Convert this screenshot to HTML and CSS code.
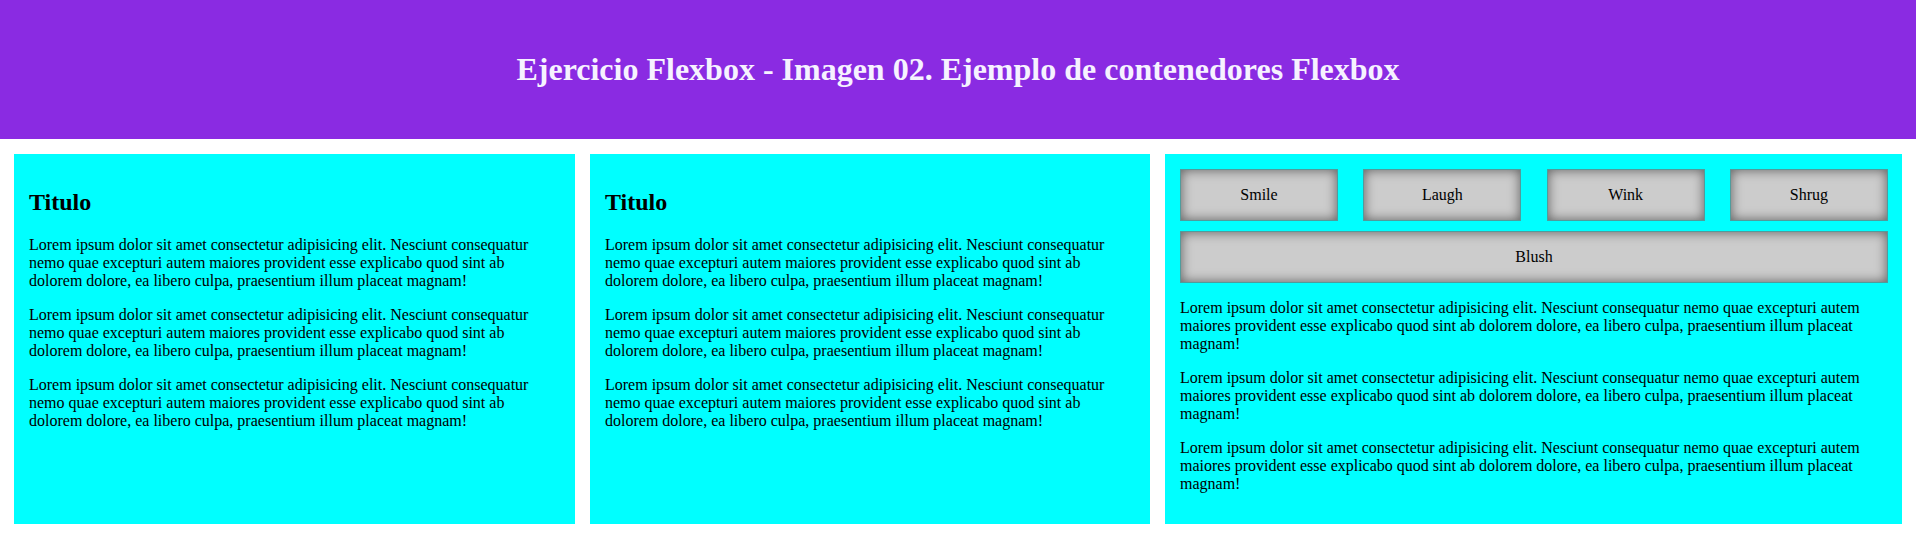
FILE: index.html
```html
<!DOCTYPE html>
<html lang="es">
<head>
<meta charset="utf-8">
<title>Ejercicio Flexbox</title>
<link rel="stylesheet" href="styles.css">
</head>
<body>
<header class="top">
  <h1 class="top-title">Ejercicio Flexbox - Imagen 02. Ejemplo de contenedores Flexbox</h1>
</header>
<main class="main">
  <article class="card card-a">
    <h2 class="card-title">Titulo</h2>
    <p class="text">Lorem ipsum dolor sit amet consectetur adipisicing elit. Nesciunt consequatur nemo quae excepturi autem maiores provident esse explicabo quod sint ab dolorem dolore, ea libero culpa, praesentium illum placeat magnam!</p>
    <p class="text">Lorem ipsum dolor sit amet consectetur adipisicing elit. Nesciunt consequatur nemo quae excepturi autem maiores provident esse explicabo quod sint ab dolorem dolore, ea libero culpa, praesentium illum placeat magnam!</p>
    <p class="text">Lorem ipsum dolor sit amet consectetur adipisicing elit. Nesciunt consequatur nemo quae excepturi autem maiores provident esse explicabo quod sint ab dolorem dolore, ea libero culpa, praesentium illum placeat magnam!</p>
  </article>
  <article class="card card-b">
    <h2 class="card-title">Titulo</h2>
    <p class="text">Lorem ipsum dolor sit amet consectetur adipisicing elit. Nesciunt consequatur nemo quae excepturi autem maiores provident esse explicabo quod sint ab dolorem dolore, ea libero culpa, praesentium illum placeat magnam!</p>
    <p class="text">Lorem ipsum dolor sit amet consectetur adipisicing elit. Nesciunt consequatur nemo quae excepturi autem maiores provident esse explicabo quod sint ab dolorem dolore, ea libero culpa, praesentium illum placeat magnam!</p>
    <p class="text">Lorem ipsum dolor sit amet consectetur adipisicing elit. Nesciunt consequatur nemo quae excepturi autem maiores provident esse explicabo quod sint ab dolorem dolore, ea libero culpa, praesentium illum placeat magnam!</p>
  </article>
  <article class="card card-c">
    <div class="buttons">
      <div class="btn">Smile</div>
      <div class="btn">Laugh</div>
      <div class="btn">Wink</div>
      <div class="btn">Shrug</div>
      <div class="btn btn-wide">Blush</div>
    </div>
    <p class="text">Lorem ipsum dolor sit amet consectetur adipisicing elit. Nesciunt consequatur nemo quae excepturi autem maiores provident esse explicabo quod sint ab dolorem dolore, ea libero culpa, praesentium illum placeat magnam!</p>
    <p class="text">Lorem ipsum dolor sit amet consectetur adipisicing elit. Nesciunt consequatur nemo quae excepturi autem maiores provident esse explicabo quod sint ab dolorem dolore, ea libero culpa, praesentium illum placeat magnam!</p>
    <p class="text">Lorem ipsum dolor sit amet consectetur adipisicing elit. Nesciunt consequatur nemo quae excepturi autem maiores provident esse explicabo quod sint ab dolorem dolore, ea libero culpa, praesentium illum placeat magnam!</p>
  </article>
</main>
</body>
</html>
```
FILE: styles.css
```css
* { box-sizing: border-box; }
html, body {
  margin: 0;
  padding: 0;
}
body {
  font-family: "Liberation Serif", "Times New Roman", serif;
  font-size: 16px;
  color: #000;
  background: #fff;
}
.top {
  height: 139px;
  background: #8a2be2;
  display: flex;
  align-items: center;
  justify-content: center;
}
.top-title {
  margin: 0;
  font-size: 32px;
  font-weight: bold;
  color: #f6f2ff;
}
.main {
  display: grid;
  grid-template-columns: minmax(0, 561fr) minmax(0, 560fr) minmax(0, 737fr);
  column-gap: 15px;
  padding: 15px 14px 14px 14px;
  height: 398px;
}
.card {
  background: #00ffff;
  padding: 15px;
}
.card-a, .card-b { padding-right: 24px; }
.card-c { padding-right: 14px; }
.card-title {
  font-size: 24px;
  font-weight: bold;
  margin: 20px 0 20px 0;
}
.text {
  margin: 16px 0;
  line-height: normal;
}
.buttons {
  display: flex;
  flex-wrap: wrap;
  justify-content: space-between;
  row-gap: 10px;
}
.btn {
  width: 158px;
  height: 52px;
  display: flex;
  align-items: center;
  justify-content: center;
  background: #cccccc;
  border: 1px solid #4f9c9c;
  box-shadow: inset 0 0 12px rgba(0, 0, 0, 0.55);
}
.btn-wide {
  width: 100%;
}
```
